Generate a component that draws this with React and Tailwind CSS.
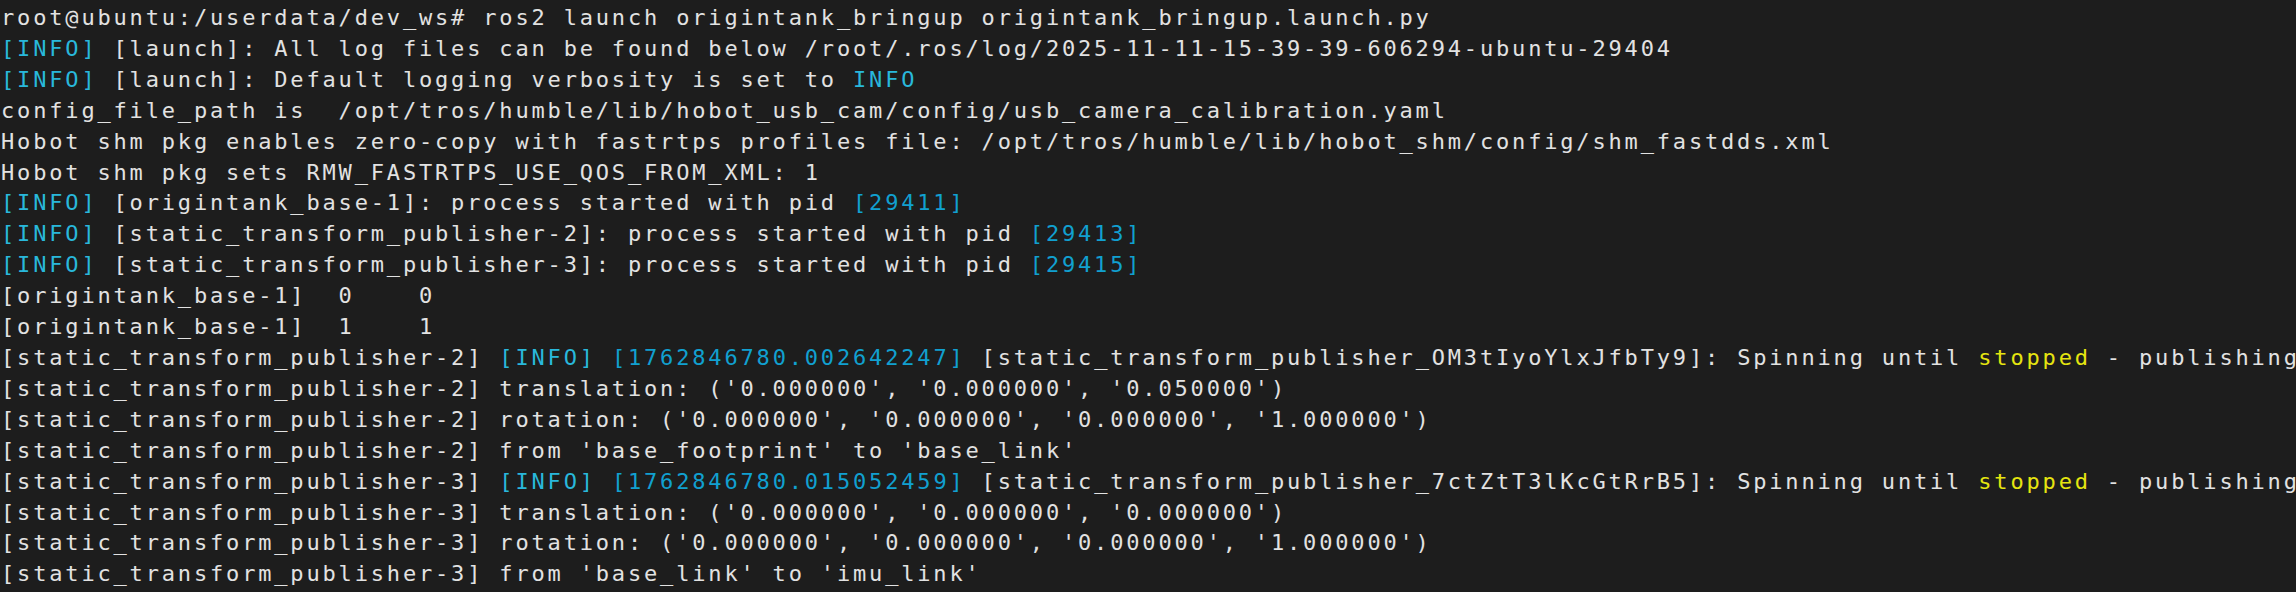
import React from 'react';

const C = ({ children }) => <span className="text-[#29b8db]">{children}</span>;
const N = ({ children }) => <span className="text-[#11a0d0]">{children}</span>;
const Y = ({ children }) => <span className="text-[#e5e510]">{children}</span>;

const lines = [
  <>root@ubuntu:/userdata/dev_ws# ros2 launch origintank_bringup origintank_bringup.launch.py</>,
  <><C>[INFO]</C> [launch]: All log files can be found below /root/.ros/log/2025-11-11-15-39-39-606294-ubuntu-29404</>,
  <><C>[INFO]</C> [launch]: Default logging verbosity is set to <C>INFO</C></>,
  <>config_file_path is  /opt/tros/humble/lib/hobot_usb_cam/config/usb_camera_calibration.yaml</>,
  <>Hobot shm pkg enables zero-copy with fastrtps profiles file: /opt/tros/humble/lib/hobot_shm/config/shm_fastdds.xml</>,
  <>Hobot shm pkg sets RMW_FASTRTPS_USE_QOS_FROM_XML: 1</>,
  <><C>[INFO]</C> [origintank_base-1]: process started with pid <N>[29411]</N></>,
  <><C>[INFO]</C> [static_transform_publisher-2]: process started with pid <N>[29413]</N></>,
  <><C>[INFO]</C> [static_transform_publisher-3]: process started with pid <N>[29415]</N></>,
  <>[origintank_base-1]  0    0</>,
  <>[origintank_base-1]  1    1</>,
  <>[static_transform_publisher-2] <C>[INFO]</C> <N>[1762846780.002642247]</N> [static_transform_publisher_OM3tIyoYlxJfbTy9]: Spinning until <Y>stopped</Y> - publishing</>,
  <>[static_transform_publisher-2] translation: ('0.000000', '0.000000', '0.050000')</>,
  <>[static_transform_publisher-2] rotation: ('0.000000', '0.000000', '0.000000', '1.000000')</>,
  <>[static_transform_publisher-2] from 'base_footprint' to 'base_link'</>,
  <>[static_transform_publisher-3] <C>[INFO]</C> <N>[1762846780.015052459]</N> [static_transform_publisher_7ctZtT3lKcGtRrB5]: Spinning until <Y>stopped</Y> - publishing</>,
  <>[static_transform_publisher-3] translation: ('0.000000', '0.000000', '0.000000')</>,
  <>[static_transform_publisher-3] rotation: ('0.000000', '0.000000', '0.000000', '1.000000')</>,
  <>[static_transform_publisher-3] from 'base_link' to 'imu_link'</>,
];

export default function App() {
  return (
    <div className="w-[2296px] h-[592px] overflow-hidden bg-[#1d1d1d] pl-[1px] pt-[3px]">
      <div className="flex flex-col font-['DejaVu_Sans_Mono',monospace] text-[22px] leading-[30.9px] tracking-[2.83px] text-[#e2e2e2]">
        {lines.map((line, i) => (
          <div key={i} className="whitespace-pre">{line}</div>
        ))}
      </div>
    </div>
  );
}
